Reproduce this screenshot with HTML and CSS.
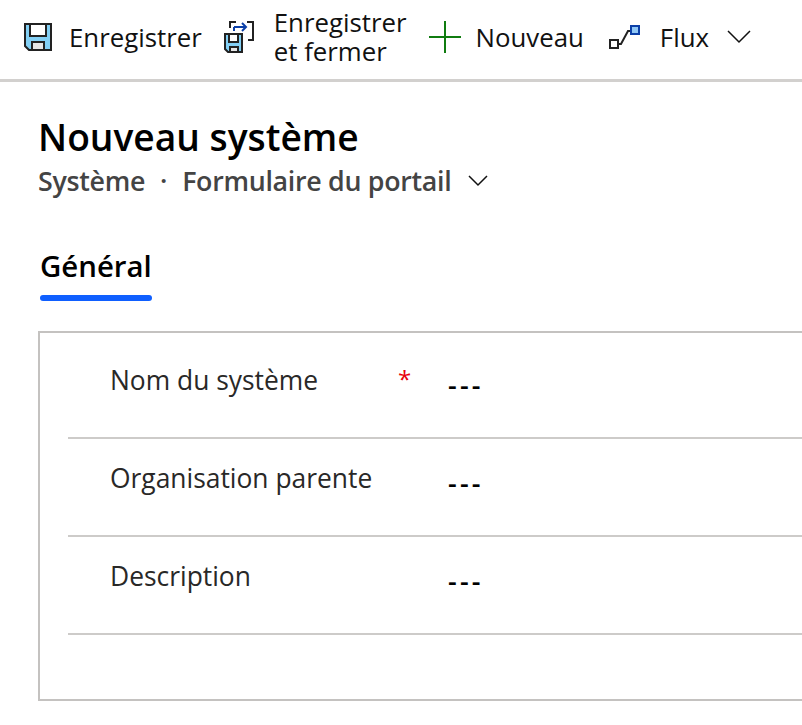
FILE: index.html
```html
<!DOCTYPE html>
<html lang="fr">
<head>
    <meta charset="UTF-8">
    <title>Nouveau système</title>
    <link rel="stylesheet" href="styles.css">
</head>
<body>
    <div class="toolbar">
        <div class="tool tool-save">
            <svg class="icon" width="30" height="30" viewBox="0 0 30 30">
                <path d="M2 2h26v26H6l-4-4z" fill="#83d0f5" stroke="#222" stroke-width="2"/>
                <rect x="7" y="2" width="16" height="12" fill="#fff" stroke="#222" stroke-width="2"/>
                <rect x="9" y="20" width="12" height="8" fill="#e6e6e6" stroke="#222" stroke-width="2"/>
            </svg>
            <span>Enregistrer</span>
        </div>
        <div class="tool tool-close">
            <svg class="icon" width="32" height="34" viewBox="0 0 32 34">
                <path d="M7 8V2h6M24 2h6v18h-5" fill="none" stroke="#222" stroke-width="2"/>
                <path d="M11 7h12M19 3l4 4-4 4M11 7v4" fill="none" stroke="#0b3fa8" stroke-width="2"/>
                <path d="M2 14h17v18H5l-3-3z" fill="#83d0f5" stroke="#222" stroke-width="2"/>
                <rect x="6" y="14" width="9" height="8" fill="#fff" stroke="#222" stroke-width="2"/>
                <rect x="7" y="27" width="8" height="5" fill="#e6e6e6" stroke="#222" stroke-width="2"/>
            </svg>
            <span class="two-lines">Enregistrer<br>et fermer</span>
        </div>
        <div class="tool tool-new">
            <svg class="icon" width="32" height="32" viewBox="0 0 32 32">
                <path d="M16 0v32M0 16h32" stroke="#107c10" stroke-width="2"/>
            </svg>
            <span>Nouveau</span>
        </div>
        <div class="tool tool-flow">
            <svg class="icon" width="32" height="24" viewBox="0 0 32 24">
                <rect x="2" y="15" width="8" height="8" fill="#fff" stroke="#222" stroke-width="2"/>
                <path d="M10 19h3l7-13h3" fill="none" stroke="#222" stroke-width="2"/>
                <rect x="23" y="1" width="8" height="8" fill="#90c8f6" stroke="#0b3fa8" stroke-width="2"/>
            </svg>
            <span>Flux</span>
            <svg class="chevron-big" width="24" height="14" viewBox="0 0 24 14">
                <path d="M1 1l11 11L23 1" fill="none" stroke="#111" stroke-width="1.5"/>
            </svg>
        </div>
    </div>

    <div class="header">
        <h1>Nouveau système</h1>
        <div class="subtitle">
            <span>Système</span>
            <span class="dot">·</span>
            <span>Formulaire du portail</span>
            <svg class="chevron" width="20" height="12" viewBox="0 0 20 12">
                <path d="M1 1l9 9 9-9" fill="none" stroke="#111" stroke-width="1.5"/>
            </svg>
        </div>
    </div>

    <div class="tabs">
        <div class="tab">Général</div>
    </div>

    <div class="card">
        <div class="row">
            <div class="label">Nom du système</div>
            <div class="required">*</div>
            <div class="value">---</div>
        </div>
        <div class="row">
            <div class="label">Organisation parente</div>
            <div class="required"></div>
            <div class="value">---</div>
        </div>
        <div class="row">
            <div class="label">Description</div>
            <div class="required"></div>
            <div class="value">---</div>
        </div>
    </div>
</body>
</html>
```

FILE: styles.css
```css
html, body {
    overflow: hidden;
}
body {
    margin: 0;
    height: 725px;
    font-family: "Open Sans", "Noto Sans", sans-serif;
    color: #111;
    background-color: #fff;
}
.toolbar {
    display: flex;
    align-items: center;
    box-sizing: border-box;
    height: 82px;
    padding: 0 0 5px 23px;
    border-bottom: 3px solid #d2d0ce;
    font-size: 25.8px;
}
.tool {
    display: flex;
    align-items: center;
}
.icon {
    flex: none;
}
.tool-save span {
    margin-left: 16px;
}
.tool-close {
    margin-left: 21px;
}
.tool-close span {
    margin-left: 19px;
}
.two-lines {
    line-height: 29px;
}
.tool-new {
    margin-left: 22px;
}
.tool-new span {
    margin-left: 15px;
}
.tool-flow {
    margin-left: 24px;
}
.tool-flow span {
    margin-left: 20px;
}
.chevron-big {
    margin-left: 18px;
}
.header {
    padding: 32px 0 0 38px;
}
h1 {
    margin: 0 0 5px;
    font-size: 37.2px;
    line-height: 45px;
    font-weight: 600;
    color: #000;
}
.subtitle {
    display: flex;
    align-items: center;
    font-size: 26.8px;
    line-height: 34px;
    font-weight: 600;
    color: #444;
    letter-spacing: -0.3px;
}
.dot {
    margin: 0 15px;
}
.chevron {
    margin-left: 17px;
}
.tabs {
    display: flex;
    padding: 48px 0 0 40px;
}
.tab {
    font-size: 29.4px;
    line-height: 40px;
    font-weight: 600;
    color: #000;
}
.tab::after {
    content: "";
    display: block;
    height: 6px;
    margin-top: 9px;
    border-radius: 3px;
    background-color: #0f5fff;
}
.card {
    margin: 30px 0 0 38px;
    height: 358px;
    padding: 8px 0 0 28px;
    border: 2px solid #c4c2c0;
    border-right: none;
}
.row {
    display: flex;
    height: 96px;
    padding-left: 42px;
    border-bottom: 2px solid #cdcbc9;
}
.label {
    width: 288px;
    padding-top: 19px;
    font-size: 26.4px;
    line-height: 40px;
    color: #292827;
}
.required {
    width: 49px;
    padding-top: 18px;
    color: #e8000d;
    font-size: 24px;
    line-height: 40px;
}
.value {
    margin-left: 1px;
    padding-top: 24px;
    font-size: 27px;
    line-height: 40px;
    font-weight: 600;
    letter-spacing: 3.2px;
    color: #000;
}
```
